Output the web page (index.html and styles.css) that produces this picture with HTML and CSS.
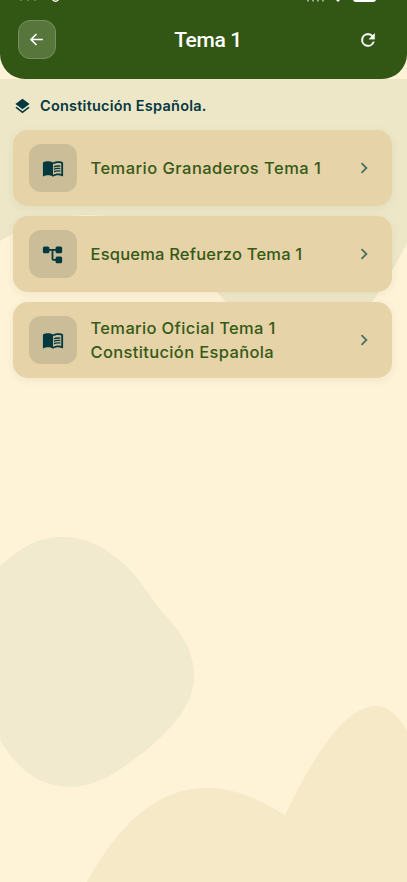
FILE: index.html
```html
<!DOCTYPE html>
<html lang="es">
<head>
<meta charset="utf-8">
<meta name="viewport" content="width=device-width, initial-scale=1">
<title>Tema 1</title>
<link rel="stylesheet" href="styles.css">
</head>
<body>
<svg width="0" height="0" class="defs" aria-hidden="true">
  <symbol id="book" viewBox="0 0 24 24"><path d="M21 5c-1.110-.35-2.330-.5-3.500-.5-1.950 0-4.050.4-5.500 1.500-1.450-1.100-3.550-1.500-5.500-1.500S2.450 4.900 1 6v14.650c0 .25.25.5.5.5.1 0 .15-.05.25-.05C3.100 20.450 5.050 20 6.500 20c1.950 0 4.050.4 5.500 1.500 1.350-.85 3.800-1.500 5.500-1.500 1.650 0 3.350.3 4.750 1.050.1.050.15.050.25.050.25 0 .5-.25.5-.5V6c-.6-.45-1.250-.75-2-1zm0 13.500c-1.100-.35-2.300-.5-3.500-.5-1.700 0-4.150.65-5.500 1.500V8c1.350-.85 3.800-1.500 5.500-1.500 1.200 0 2.400.15 3.500.5v11.500z"/><path d="M17.500 10.500c.88 0 1.730.09 2.500.26V9.240c-.79-.15-1.640-.24-2.500-.24-1.700 0-3.240.29-4.500.83v1.660c1.130-.64 2.700-.99 4.500-.99zM13 12.490v1.660c1.130-.64 2.700-.99 4.500-.99.88 0 1.730.09 2.500.26V11.900c-.79-.15-1.640-.24-2.500-.24-1.700 0-3.240.3-4.500.83zM17.500 14.330c-1.700 0-3.240.29-4.500.83v1.660c1.130-.64 2.700-.99 4.500-.99.88 0 1.730.09 2.500.26v-1.520c-.79-.16-1.640-.24-2.500-.24z"/></symbol>
  <symbol id="chevron" viewBox="0 0 24 24"><path d="M8.590 16.590 13.170 12 8.590 7.410 10 6l6 6-6 6z"/></symbol>
</svg>
<div class="screen">
  <header class="header">
    <button class="back" aria-label="Volver"><svg viewBox="0 0 24 24"><path d="M20 12H5.500M12 5l-7 7 7 7"/></svg></button>
    <h1 class="title">Tema 1</h1>
    <button class="reload" aria-label="Recargar"><svg viewBox="0 0 24 24"><path d="M17.650 6.350A7.958 7.958 0 0 0 12 4a8 8 0 1 0 7.730 10h-2.080A6 6 0 1 1 12 6c1.660 0 3.140.69 4.220 1.780L13 11h7V4z"/></svg></button>
    <svg class="status" viewBox="0 0 407 3" aria-hidden="true"><path class="dim" d="M20 0h2v.5h-2zM27 0h2v.5h-2zM34 0h2v.5h-2zM307 0h2v1.500h-2zM312 0h2v1.500h-2zM317 0h2v1.500h-2zM322 0h2v1.500h-2z"/><path d="M52 0q3.500 4 7 0l-1.500-.2q-2 1.600-4 0zM336 0h4l-2 2zM353 0h23q-.5 2-3 2h-17q-2.500 0-3-2z"/></svg>
  </header>
  <main class="content">
    <svg class="shapes" viewBox="0 79 407 803" aria-hidden="true">
      <path class="shape-top" d="M0 79H407V243L392 271Q385 283 379 292L372 302Q340 350 300 354Q262 345 226 302L217 292Q174 222 105 216Q80 214 60 217Q34 221 0 241Z"/>
      <path class="shape-left" d="M0 566C22 546 40 537 62 537C96 537 126 560 148 593C156 605 160 610 165 615C183 634 194 653 194 676C194 704 173 728 145 751C136 758 128 764 119 770C105 779 88 787 71 787C40 787 18 770 0 740Z"/>
      <path class="shape-bottom" d="M87 882C120 822 158 788 207 788C234 788 257 798 285 815C315 753 346 706 376 706C389 706 399 717 407 731V882Z"/>
    </svg>
    <h2 class="section"><svg viewBox="0 0 24 24"><path d="m12 1 10 7.500L12 16 2 8.500z"/><path d="m12 18.800 8.300-6.400L22 13.800 12 21.500 2 13.800l1.700-1.400z"/></svg><span>Constitución Española.</span></h2>
    <div class="list">
      <a class="card"><span class="tile"><svg><use href="#book"/></svg></span><span class="label"><span class="l1">Temario Granaderos Tema 1</span></span><svg class="chevron"><use href="#chevron"/></svg></a>
      <a class="card"><span class="tile"><svg class="tree" viewBox="0 0 24 24" preserveAspectRatio="none"><path d="M2.800 3h3.800Q8.500 3 8.500 4.800V6h7V4.800Q15.500 3 17.300 3h3.900Q23 3 23 4.800v4.400q0 1.800-1.800 1.800h-3.900Q15.500 11 15.500 9.200V8H13v10h2.500v-1.200q0-1.800 1.800-1.800h3.900q1.800 0 1.800 1.800v4.400q0 1.800-1.800 1.800h-3.900q-1.800 0-1.800-1.800V20H13q-2 0-2-2V8H8.500v1.200q0 1.800-1.900 1.800H2.800Q1 11 1 9.200V4.800Q1 3 2.800 3z"/></svg></span><span class="label"><span class="l2">Esquema Refuerzo Tema 1</span></span><svg class="chevron"><use href="#chevron"/></svg></a>
      <a class="card"><span class="tile"><svg><use href="#book"/></svg></span><span class="label"><span class="l3">Temario Oficial Tema 1</span><span class="l4">Constitución Española</span></span><svg class="chevron"><use href="#chevron"/></svg></a>
    </div>
  </main>
</div>
</body>
</html>
```
FILE: styles.css
```css
* { box-sizing: border-box; }
body { margin: 0; background: #fef2d7; font-family: Inter, "Liberation Sans", sans-serif; }
button { border: 0; padding: 0; background: none; }
svg { display: block; fill: currentColor; }
.defs { position: absolute; }
.screen { height: 882px; overflow: hidden; display: flex; flex-direction: column; }
.header {
  position: relative; height: 79px; flex: none; padding: 20px 20px 0 18px;
  display: grid; grid-template-columns: 38px 1fr 38px; align-items: start;
  background: #325614; color: #fff; border-radius: 0 0 25px 25px;
}
.status { position: absolute; top: 0; left: 0; width: 407px; height: 3px; }
.status .dim { opacity: .5; }
.back {
  width: 38px; height: 39px; border-radius: 12px; background: #56763c; border: 1px solid #76905f;
  color: #fff; display: grid; place-items: center;
}
.back svg { width: 19px; height: 19px; margin-right: 1px; fill: none; stroke: currentColor; stroke-width: 2; }
.title { margin: 0; padding-left: 11px; text-align: center; font: 500 21px/41px Roboto, sans-serif; letter-spacing: -.35px; }
.reload { width: 38px; height: 39px; color: #fff; display: grid; place-items: center; }
.reload svg { width: 20px; height: 20px; stroke: currentColor; stroke-width: .4; }
.content { position: relative; flex: 1; padding: 16px 15.500px 0 12.500px; }
.shapes { position: absolute; top: 0; left: 0; width: 407px; height: 803px; }
.shape-top { fill: #ede7c8; }
.shape-left { fill: #f1eacf; }
.shape-bottom { fill: #f6e9c8; }
.section {
  position: relative; margin: 0; height: 20px; padding-left: 1.500px; display: flex; align-items: center; gap: 9px;
  font-size: 14.500px; font-weight: 600; line-height: 20px; letter-spacing: .23px; color: #04383f; white-space: nowrap;
}
.section span { padding-top: 1px; }
.section svg { width: 17px; height: 17px; margin-top: 2px; }
.list { position: relative; margin-top: 15px; display: flex; flex-direction: column; gap: 10px; }
.card {
  height: 76px; padding: 0 17px 0 16px; display: flex; align-items: center;
  background: #e6d3a7; border-radius: 15px; box-shadow: 0 2px 8px rgba(50, 86, 20, .07);
}
.tile { width: 48px; height: 48px; border-radius: 12px; background: #cabd98; color: #04383f; display: grid; place-items: center; }
.tile svg { width: 22px; height: 22px; }
.tile .tree { width: 21px; height: 20px; }
.label { flex: 1; margin-left: 14px; display: flex; flex-direction: column; font-size: 16.500px; line-height: 24px; font-weight: 500; color: #365a18; white-space: nowrap; }
.l1 { letter-spacing: .46px; }
.l2 { letter-spacing: .2px; }
.l3, .l4 { letter-spacing: .35px; }
.chevron { width: 22px; height: 22px; color: #4c7068; }
```
